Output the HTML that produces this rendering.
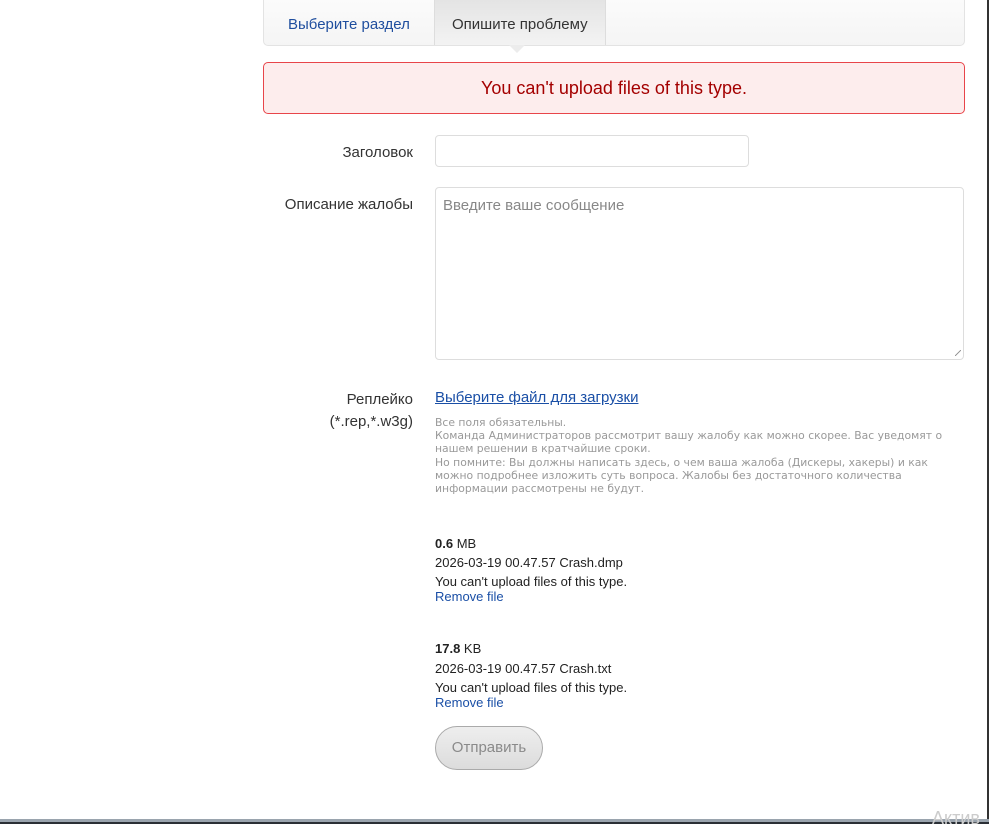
<!DOCTYPE html>
<html><head><meta charset="utf-8"><style>
*{box-sizing:border-box;margin:0;padding:0}
body{width:989px;height:824px;background:#fff;font-family:"Liberation Sans",Arial,sans-serif;position:relative;overflow:hidden;color:#333}
.a{position:absolute}
.tabs{left:263px;top:0;width:702px;height:46px;border:1px solid #e3e3e3;border-top:none;border-radius:0 0 5px 5px;background:linear-gradient(#fbfbfb,#f5f5f5)}
.t1{left:288px;top:16px;font-size:15px;color:#1f4e9e}
.t2bg{left:434px;top:0;width:172px;height:45px;background:linear-gradient(#e4e4e4,#f3f3f3);border-left:1px solid #ddd;border-right:1px solid #ddd}
.t2{left:452px;top:16px;font-size:15px;color:#333}
.arrow{left:509px;top:45px;width:0;height:0;border-left:8px solid transparent;border-right:8px solid transparent;border-top:8px solid #ececec}
.alert{left:263px;top:62px;width:702px;height:52px;border:1px solid #e8454a;border-radius:5px;background:#fdeded;text-align:center;line-height:50px;font-size:18px;color:#a40000}
.lbl{font-size:15px;color:#333;text-align:right;width:150px;left:263px}
.inp{border:1px solid #ddd;border-radius:4px;background:#fff}
.ph{font-size:15px;color:#888}
.help{left:435px;top:416px;font-family:"DejaVu Sans",sans-serif;font-size:10.8px;color:#999;line-height:13.2px;width:528px}
.f{font-size:13px;color:#222;left:435px}
.rm{font-size:13px;color:#1a4fa6;left:435px}
.btn{left:435px;top:726px;width:108px;height:44px;border:1px solid #aaa;border-radius:22px;background:linear-gradient(#eee,#dcdcdc);font-size:15px;color:#8a8a8a;text-align:center;line-height:42px}
</style></head><body>
<div class="a tabs"></div>
<div class="a t2bg"></div>
<div class="a t1">Выберите раздел</div>
<div class="a t2">Опишите проблему</div>
<div class="a arrow"></div>
<div class="a alert">You can't upload files of this type.</div>
<div class="a lbl" style="top:144px">Заголовок</div>
<div class="a inp" style="left:435px;top:135px;width:314px;height:32px"></div>
<div class="a lbl" style="top:196px">Описание жалобы</div>
<div class="a inp" style="left:435px;top:187px;width:529px;height:173px"></div>
<div class="a ph" style="left:443px;top:197px">Введите ваше сообщение</div>
<div class="a" style="left:955px;top:350px;width:6px;height:6px;background:linear-gradient(135deg,transparent 45%,#999 45%,#999 55%,transparent 55%)"></div>
<div class="a lbl" style="top:389px;line-height:22px">Реплейко<br>(*.rep,*.w3g)</div>
<div class="a" style="left:435px;top:389px;font-size:15px;color:#1a4fa6;text-decoration:underline">Выберите файл для загрузки</div>
<div class="a help">Все поля обязательны.<br>Команда Администраторов рассмотрит вашу жалобу как можно скорее. Вас уведомят о нашем решении в кратчайшие сроки.<br>Но помните: Вы должны написать здесь, о чем ваша жалоба (Дискеры, хакеры) и как можно подробнее изложить суть вопроса. Жалобы без достаточного количества информации рассмотрены не будут.</div>
<div class="a f" style="top:536px"><b>0.6</b> MB</div>
<div class="a f" style="top:555px">2026-03-19 00.47.57 Crash.dmp</div>
<div class="a f" style="top:574px">You can't upload files of this type.</div>
<div class="a rm" style="top:589px">Remove file</div>
<div class="a f" style="top:641px"><b>17.8</b> KB</div>
<div class="a f" style="top:661px">2026-03-19 00.47.57 Crash.txt</div>
<div class="a f" style="top:680px">You can't upload files of this type.</div>
<div class="a rm" style="top:695px">Remove file</div>
<div class="a btn">Отправить</div>
<div class="a" style="left:987px;top:0;width:2px;height:824px;background:#333"></div>
<div class="a" style="left:0;top:819px;width:989px;height:3px;background:#9aa4ae"></div>
<div class="a" style="left:0;top:822px;width:989px;height:2px;background:#2a2f35"></div>
<div class="a" style="left:932px;top:808px;font-size:18px;color:#ccc">Актив</div>
</body></html>
